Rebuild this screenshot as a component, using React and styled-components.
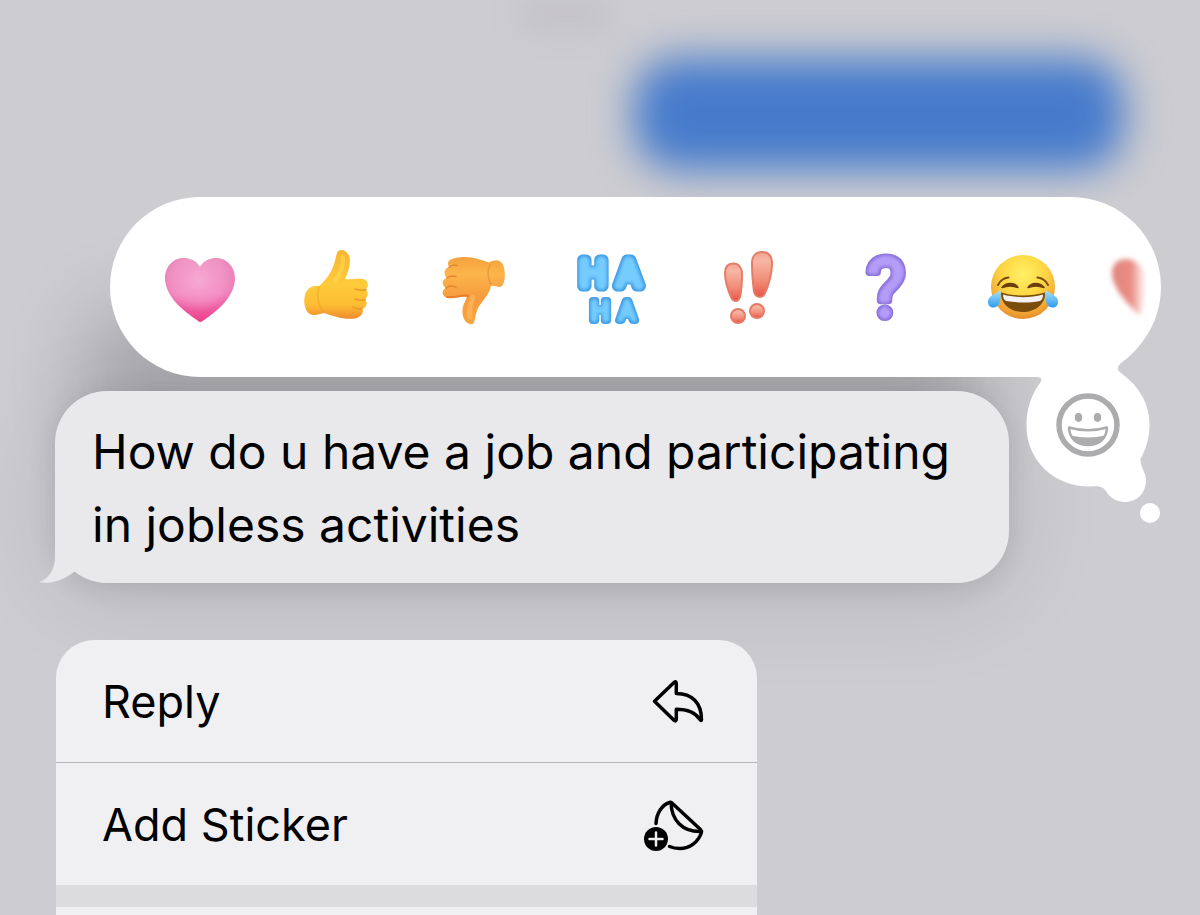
import React from "react"
import styled, { createGlobalStyle } from "styled-components"

const reactions = [
    { name: "Heart", Icon: HeartIcon },
    { name: "Thumbs up", Icon: ThumbUpIcon },
    { name: "Thumbs down", Icon: ThumbDownIcon },
    { name: "Haha", Icon: HahaIcon },
    { name: "Exclamation", Icon: ExclamationIcon },
    { name: "Question", Icon: QuestionIcon },
    { name: "Tears of joy", Icon: JoyIcon },
]

const actions = [
    { label: "Reply", Icon: ReplyIcon },
    { label: "Add Sticker", Icon: StickerIcon },
]

export default function App() {
    return (
        <Screen>
            <GlobalStyle />
            <Backdrop>
                <BlurredStamp />
                <BlurredMessage />
            </Backdrop>

            <ReactionBar>
                {reactions.map(({ name, Icon }) => (
                    <ReactionButton key={name} type="button" aria-label={name}>
                        <Icon />
                    </ReactionButton>
                ))}
                <ReactionButton type="button" aria-label="Red heart" $peek>
                    <RedHeartIcon />
                </ReactionButton>
                <BarTail />
                <MoreButton type="button" aria-label="More emoji">
                    <SmileIcon />
                </MoreButton>
            </ReactionBar>

            <Message>
                <MessageTail viewBox="0 0 44 56">
                    <path d="M16 0V29C16 44 9 52 0 55C13 58 27 52 36 44L44 36Z" />
                </MessageTail>
                How do u have a job and participating in jobless activities
            </Message>

            <Menu>
                {actions.map(({ label, Icon }) => (
                    <MenuItem key={label} type="button">
                        {label}
                        <Icon />
                    </MenuItem>
                ))}
                <MenuGap />
                <MenuRest />
            </Menu>
        </Screen>
    )
}

// darker rim with a lighter inside, gives the shapes an inflated look
function PuffyFilter({ id, light }) {
    return (
        <filter id={id} x="-0.2" y="-0.2" width="1.4" height="1.4">
            <feMorphology in="SourceAlpha" operator="erode" radius="2" result="inner" />
            <feGaussianBlur in="inner" stdDeviation="1.5" result="glow" />
            <feFlood floodColor={light} />
            <feComposite in2="glow" operator="in" />
            <feComposite in2="SourceAlpha" operator="in" result="shine" />
            <feMerge>
                <feMergeNode in="SourceGraphic" />
                <feMergeNode in="shine" />
            </feMerge>
        </filter>
    )
}

function HeartIcon() {
    return (
        <svg viewBox="0 0 72 80">
            <defs>
                <linearGradient id="pink" x1="0" y1="0" x2="0" y2="1">
                    <stop offset="0" stopColor="#e98abb" />
                    <stop offset="0.55" stopColor="#f07fba" />
                    <stop offset="1" stopColor="#ee3f8b" />
                </linearGradient>
                <radialGradient id="pinkShine" cx="0.48" cy="0.35" r="0.48">
                    <stop offset="0" stopColor="#f8b0d8" stopOpacity="0.85" />
                    <stop offset="0.6" stopColor="#f8a8d4" stopOpacity="0.5" />
                    <stop offset="1" stopColor="#f9c0df" stopOpacity="0" />
                </radialGradient>
                <path id="heartShape" d="M36 20C40 13.500 46 11 52 11C63 11 71 20 71 31C71 50 52 65 40 73C37 75.500 35 75.500 33 73C21 65 1 50 1 31C1 20 9 11 19 11C26 11 32 13.500 36 20Z" />
            </defs>
            <use href="#heartShape" fill="url(#pink)" />
            <use href="#heartShape" fill="url(#pinkShine)" />
        </svg>
    )
}

function ThumbUpIcon() {
    return (
        <svg viewBox="0 0 72 80">
            <defs>
                <linearGradient id="hand" x1="0" y1="0" x2="0" y2="1">
                    <stop offset="0" stopColor="#f9b62f" />
                    <stop offset="0.5" stopColor="#fdcb3a" />
                    <stop offset="0.8" stopColor="#fcbd33" />
                    <stop offset="1" stopColor="#f08a2c" />
                </linearGradient>
            </defs>
            <path
                fill="url(#hand)"
                d="M18 39C25 33 30 26 33 17C35 12 35 5 38 3.500C42 1.500 47 5 48.500 10C50 17 47 26 44 32C50 33 57 31 62 32C68 33 68 40 64.500 42.500C68 45 67 50 64 52.500C67 55 66 60 61.500 61.500C63 66 60 70 54 71.500C43 73 32 69 23 66C18 67 14 69 10 67.500C4 65 2 55 4 48C6 41 12 38 18 39Z"
            />
            <path d="M18 40C15 47 17 60 23 65" stroke="#f0a126" strokeWidth="1.500" fill="none" opacity="0.6" />
            <path d="M65 42.500C61 44 57 43 54 42M64 52.500C61 54 57 53 54 52M61 61.500C58 62.500 55 62 52 60" stroke="#ec962c" strokeWidth="1.500" strokeLinecap="round" fill="none" />
            <path d="M42 10C43 18 38 28 34 34" stroke="#ffdb62" strokeWidth="4" strokeLinecap="round" fill="none" opacity="0.5" />
        </svg>
    )
}

function ThumbDownIcon() {
    return (
        <svg viewBox="0 0 72 80">
            <defs>
                <linearGradient id="handDown" x1="0" y1="0" x2="0" y2="1">
                    <stop offset="0" stopColor="#f3a13c" />
                    <stop offset="0.25" stopColor="#fcb54b" />
                    <stop offset="0.6" stopColor="#f79b3c" />
                    <stop offset="1" stopColor="#f8a640" />
                </linearGradient>
            </defs>
            <path
                fill="url(#handDown)"
                d="M51 15.500C43 13 36 10 27 10C20 10 14 11 11 14C9 16 10 18 11 20C6 21 5 28 9 31C4 32 3 38 8 41C3 43 4 50 9 50.500C16 51 23 49 29 50C27 55 24 59 24.500 66C25 73 29 78 35 77C37 75 37 68 40 61C44 54 51 48 53 39C57 38 60 41 63.500 39.500C68 35 68 22 64 16C60 12 56 13 51 15.500Z"
            />
            <path d="M11 20.500C14 18 17 17.500 19 18.500M9 31C12 28.500 15 28.500 18 29.500M8 41C12 38.500 16 39 18 40.500" stroke="#e58631" strokeWidth="1.500" strokeLinecap="round" fill="none" />
            <path d="M52 17C49 24 50 32 53 38" stroke="#e38a35" strokeWidth="1.500" fill="none" opacity="0.6" />
            <path d="M9 50C18 51 26 47 30 49" stroke="#e77e2b" strokeWidth="2" strokeLinecap="round" fill="none" />
            <path d="M35 50C32 57 31 64 32 70" stroke="#ffbd62" strokeWidth="5" strokeLinecap="round" fill="none" opacity="0.6" />
        </svg>
    )
}

function HahaIcon() {
    return (
        <svg viewBox="0 0 72 80">
            <defs>
                <PuffyFilter id="puffyBlue" light="#74ccff" />
            </defs>
            <g fill="#3f9ce6" stroke="#3f9ce6" filter="url(#puffyBlue)">
                <BalloonText y="39" fontSize="36" strokeWidth="11">
                    <tspan x="18">H</tspan>
                    <tspan x="54">A</tspan>
                </BalloonText>
                <BalloonText y="73" fontSize="25" strokeWidth="8">
                    <tspan x="25">H</tspan>
                    <tspan x="52">A</tspan>
                </BalloonText>
            </g>
        </svg>
    )
}

function ExclamationIcon() {
    return (
        <svg viewBox="0 0 72 80">
            <defs>
                <linearGradient id="coral" x1="0" y1="0" x2="0" y2="1">
                    <stop offset="0" stopColor="#f2a592" />
                    <stop offset="0.2" stopColor="#f6b6a4" />
                    <stop offset="0.65" stopColor="#f18b76" />
                    <stop offset="1" stopColor="#ea5247" />
                </linearGradient>
            </defs>
            <g fill="url(#coral)" stroke="#e57c67" strokeWidth="2">
                <path d="M21 16.500C27 16.500 30 21 30 27C30 36 29 46 28 50C27 53 26 54 24 54C22 54 20 53 19 50C16 43 13 32 13 26C13 20 16 16.500 21 16.500Z" />
                <path d="M50 5C57 5 60 10 60 17C60 27 56 40 53 46C52 49 50 50 48 50C45 50 43 48 42 45C41 37 40 25 40 16C40 9 44 5 50 5Z" />
                <circle cx="26" cy="69" r="7" />
                <circle cx="45" cy="64" r="7" />
            </g>
        </svg>
    )
}

function QuestionIcon() {
    return (
        <svg viewBox="0 0 72 80">
            <defs>
                <PuffyFilter id="puffyViolet" light="#b49df8" />
            </defs>
            <g fill="#8b70dc" stroke="#8b70dc" filter="url(#puffyViolet)">
                <MarkText x="37" y="70" fontSize="82" strokeWidth="8">?</MarkText>
            </g>
        </svg>
    )
}

function JoyIcon() {
    return (
        <svg viewBox="0 0 72 80">
            <defs>
                <radialGradient id="face" cx="0.5" cy="0.3" r="0.7">
                    <stop offset="0" stopColor="#fff067" />
                    <stop offset="0.5" stopColor="#fdd641" />
                    <stop offset="0.85" stopColor="#f2a536" />
                    <stop offset="1" stopColor="#e58e2b" />
                </radialGradient>
                <linearGradient id="tear" x1="0" y1="0" x2="0" y2="1">
                    <stop offset="0" stopColor="#a5e2fb" />
                    <stop offset="1" stopColor="#2f9cf0" />
                </linearGradient>
            </defs>
            <circle cx="37" cy="40" r="32" fill="url(#face)" />
            <path d="M12 38C14 34 18 31 22.500 30.500M51.500 30.500C56 31 60 34 62 38" stroke="#7a4a12" strokeWidth="2" strokeLinecap="round" fill="none" />
            <path d="M16 40.500C20 35 29 35 32 40.500C27 38.500 21 38.500 16 40.500ZM42 40.500C45 35 54 35 58 40.500C53 38.500 47 38.500 42 40.500Z" fill="#6b3f0c" stroke="#6b3f0c" strokeWidth="1.500" strokeLinejoin="round" />
            <path d="M15 45.500C29 49.500 45 49.500 59 45.500C60 56 50 65 37 65C24 65 14 56 15 45.500Z" fill="#7b4d0d" />
            <path d="M17 47.500C30 51 44 51 57 47.500C57 51 56 53 54 54C43 56 31 56 20 54C18 53 17 51 17 47.500Z" fill="#f3f1f2" />
            <path d="M14.500 43C15 50 15 60 8 60.500C2 61 0 54 4 50C7 47 11 46 14.500 43ZM59.500 43C59 50 59 60 66 60.500C72 61 74 54 70 50C67 47 63 46 59.500 43Z" fill="url(#tear)" />
        </svg>
    )
}

// only the left lobe is in view, the rest fades out at the end of the bar
function RedHeartIcon() {
    return (
        <svg viewBox="0 0 42 80">
            <defs>
                <linearGradient id="redFade" x1="0" y1="0" x2="1" y2="0">
                    <stop offset="0" stopColor="#e0857d" />
                    <stop offset="0.6" stopColor="#ea8d86" />
                    <stop offset="1" stopColor="#f4b5b0" stopOpacity="0.2" />
                </linearGradient>
                <filter id="soft" x="-0.3" y="-0.3" width="1.6" height="1.6">
                    <feGaussianBlur stdDeviation="2.5" />
                </filter>
            </defs>
            <path d="M2 26C2 17 8 12 16 12C25 12 33 19 35 28C35 42 34 57 30 69C20 59 2 42 2 26Z" fill="url(#redFade)" filter="url(#soft)" />
        </svg>
    )
}

// neck, round bubble and the two trailing drops under the bar
function BarTail() {
    return (
        <TailShape viewBox="1020 340 150 190">
            <path d="M1030 350V377H1036C1041 377 1043 379 1040 383C1031 395 1026.500 409 1026.500 426C1026.500 460 1054 487 1090 486.500C1099 486 1102 486 1106 491C1110 498 1117 502 1125 502C1137 502 1146 493 1146 480C1146 472 1140 467 1140.500 459C1146 449 1149.500 438 1149.500 425C1149.500 404 1140 387 1121 373C1117 370 1116.500 367 1121 363C1128 358 1133 353 1139 346L1130 342Z" />
            <circle cx="1150" cy="513" r="10" />
        </TailShape>
    )
}

function SmileIcon() {
    return (
        <svg viewBox="0 0 64 64">
            <circle cx="32" cy="32" r="29" fill="none" stroke="#acacae" strokeWidth="5.500" />
            <ellipse cx="22.500" cy="24.500" rx="3.700" ry="4.400" fill="#acacae" />
            <ellipse cx="41.500" cy="24.500" rx="3.700" ry="4.400" fill="#acacae" />
            <path d="M13 34.500C25 38 39 38 51 34.500C50.500 46 43 52 32 52C21 52 13.500 46 13 34.500Z" fill="#fff" stroke="#acacae" strokeWidth="2.500" strokeLinejoin="round" />
            <path d="M15 42.500C26 45 38 45 49 42.500C46 50 40 52 32 52C24 52 18 50 15 42.500Z" fill="#acacae" />
        </svg>
    )
}

function ReplyIcon() {
    return (
        <MenuSvg viewBox="0 0 60 52">
            <path d="M10.500 26.300L30 7.500Q32.300 5.500 32.300 8.500V18.500C48 18.500 57.500 28 57.500 44.500Q57.300 46.500 56 44.500C51 37 44 34.300 32.300 34.300V44Q32.300 47 30 45.200Z" />
        </MenuSvg>
    )
}

function StickerIcon() {
    return (
        <MenuSvg viewBox="0 0 60 52">
            <path d="M12 25.500C12.500 15 18 7 25.500 4.500Q27 4 28.500 5.500L56.500 31.500Q58 33 57.300 35C54 44 46 50.500 36 50.500Q30 50.500 25.500 48.500" />
            <path d="M27 4.500C27.500 22 38 34 57 33.500" />
            <circle cx="12" cy="41" r="12" fill="#000" stroke="none" />
            <path d="M12 34.500V47.500M5.500 41H18.500" stroke="#f0f0f2" strokeWidth="2.500" />
        </MenuSvg>
    )
}

const GlobalStyle = createGlobalStyle`
    * {
        box-sizing: border-box;
    }
    body {
        margin: 0;
        background: #cdccd1;
    }
    button {
        border: none;
        padding: 0;
        background: none;
        font: inherit;
        color: inherit;
        cursor: pointer;
    }
    svg {
        display: block;
        overflow: visible;
    }
`
const Screen = styled.main`
    display: flex;
    flex-direction: column;
    min-height: 100vh;
    overflow: hidden;
    background: #cdccd1;
    font-family: Inter, "Liberation Sans", sans-serif;
    color: #000;
`
const Backdrop = styled.div`
    display: flex;
    flex-direction: column;
    padding: 0 73px 24px;
`
const BlurredStamp = styled.div`
    align-self: center;
    width: 90px;
    height: 30px;
    margin-right: 70px;
    background: #c3c2c7;
    filter: blur(14px);
`
const BlurredMessage = styled.div`
    align-self: flex-end;
    width: 490px;
    max-width: 100%;
    height: 112px;
    margin: 28px 3px 3px 0;
    border-radius: 44px;
    background: #467bcc;
    filter: blur(20px);
`
const ReactionBar = styled.div`
    position: relative;
    z-index: 1;
    display: flex;
    align-items: center;
    gap: 65px;
    margin: 0 39px 0 110px;
    padding: 50px 8px 50px 54px;
    border-radius: 90px;
    background: #fff;
`
const ReactionButton = styled.button`
    flex: none;
    width: ${props => props.$peek ? "42px" : "72px"};
    height: 80px;
    margin-left: ${props => props.$peek ? "-13px" : "0"};
`
const BalloonText = styled.text`
    font-family: Inter, sans-serif;
    font-weight: 400;
    text-anchor: middle;
    stroke-linejoin: round;
`
const MarkText = styled.text`
    font-family: Roboto, sans-serif;
    text-anchor: middle;
    stroke-linejoin: round;
`
const TailShape = styled.svg`
    position: absolute;
    top: 143px;
    right: -9px;
    width: 150px;
    height: 190px;
    fill: #fff;
    pointer-events: none;
`
const MoreButton = styled.button`
    position: absolute;
    top: 196px;
    right: 41px;
    width: 64px;
    height: 64px;
`
const Message = styled.div`
    position: relative;
    align-self: flex-start;
    max-width: 954px;
    margin: 14px 55px 0;
    padding: 24px 38px 22px 37px;
    border-radius: 52px;
    background: #e9e9eb;
    box-shadow:
        0 4px 28px rgba(0, 0, 0, 0.11),
        0 16px 100px rgba(0, 0, 0, 0.1),
        0 -110px 80px -30px rgba(0, 0, 0, 0.18);
    font-size: 48px;
    line-height: 73px;
`
const MessageTail = styled.svg`
    position: absolute;
    left: -16px;
    bottom: 0;
    width: 44px;
    height: 56px;
    fill: #e9e9eb;
`
const Menu = styled.div`
    display: flex;
    flex-direction: column;
    flex: 1;
    width: 701px;
    max-width: calc(100% - 112px);
    margin: 57px 56px 0;
    border-radius: 38px 38px 0 0;
    overflow: hidden;
    z-index: 1;
`
const MenuItem = styled.button`
    display: flex;
    align-items: center;
    justify-content: space-between;
    height: 122px;
    padding: 0 53px 0 46px;
    background: #f0f0f2;
    font-size: 45px;
    text-align: left;
    & + & {
        height: 123px;
        border-top: 1px solid #b4b4b8;
    }
`
const MenuGap = styled.div`
    height: 22px;
    background: #dcdcde;
`
const MenuRest = styled.div`
    flex: 1;
    background: #f0f0f2;
`
const MenuSvg = styled.svg`
    width: 60px;
    height: 52px;
    fill: none;
    stroke: #000;
    stroke-width: 3.5;
    stroke-linecap: round;
    stroke-linejoin: round;
`
